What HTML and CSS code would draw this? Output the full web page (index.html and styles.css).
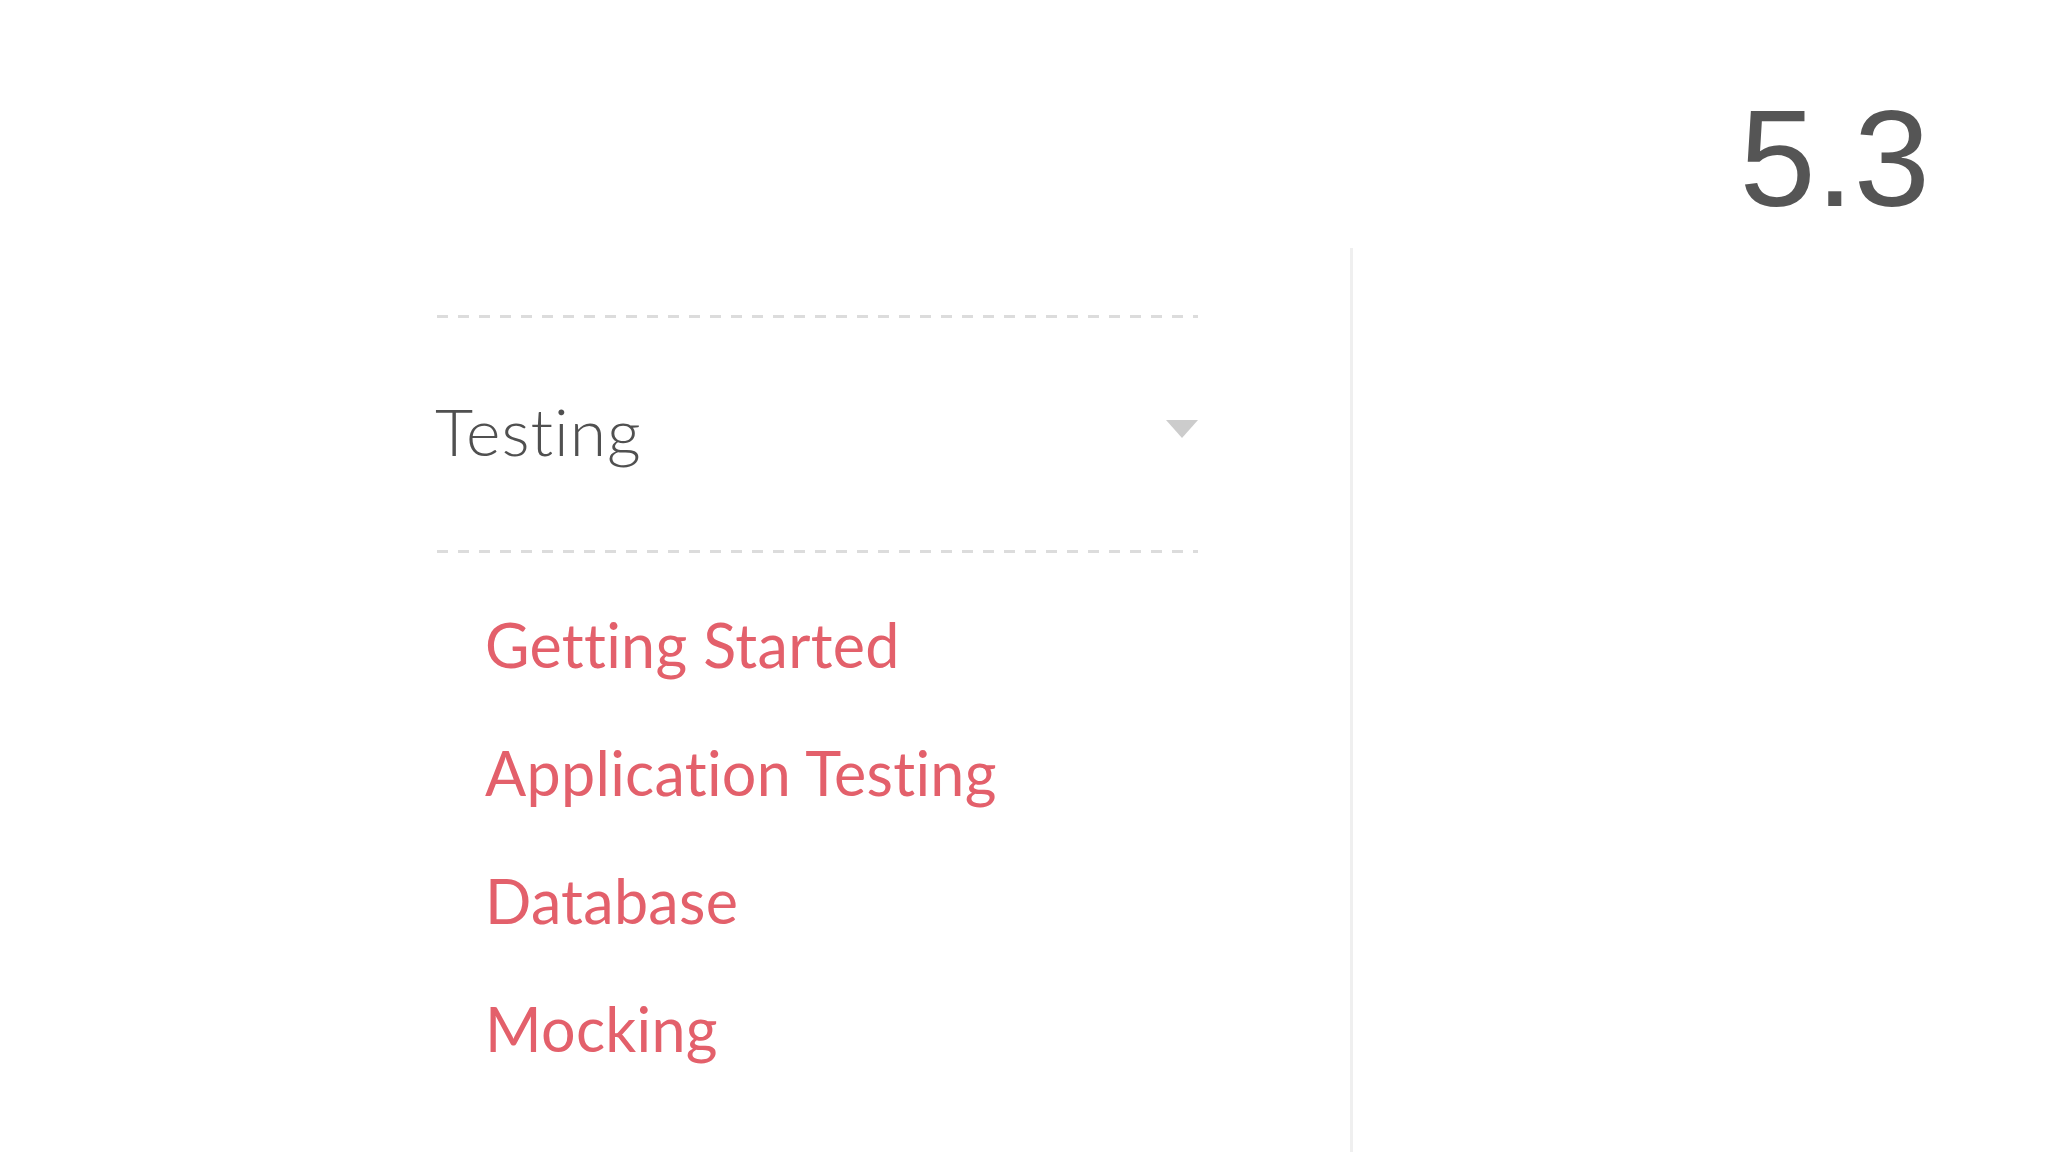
FILE: index.html
```html
<!DOCTYPE html>
<html lang="en">
<head>
<meta charset="utf-8">
<title>Testing - 5.3</title>
<link rel="stylesheet" href="styles.css">
</head>
<body>
<div class="page">
  <header class="topbar">
    <span class="version">5.3</span>
  </header>
  <div class="main">
    <nav class="sidebar">
      <div class="section">
        <div class="section-head">
          <span class="section-title">Testing</span>
          <span class="caret"></span>
        </div>
        <ul class="links">
          <li><a href="#">Getting Started</a></li>
          <li><a href="#">Application Testing</a></li>
          <li><a href="#">Database</a></li>
          <li><a href="#">Mocking</a></li>
        </ul>
      </div>
    </nav>
    <section class="content"></section>
  </div>
</div>
</body>
</html>
```

FILE: styles.css
```css
html, body {
  margin: 0;
  padding: 0;
  background: #ffffff;
}

.page {
  display: flex;
  flex-direction: column;
  height: 100vh;
  overflow: hidden;
}

.topbar {
  box-sizing: border-box;
  height: 248px;
  padding: 90px 118px 0 0;
  display: flex;
  justify-content: flex-end;
  align-items: flex-start;
}

.version {
  font-family: "Liberation Sans", Arial, sans-serif;
  font-size: 137px;
  line-height: 1;
  color: #555555;
}

.main {
  flex: 1;
  display: flex;
}

.sidebar {
  width: 763px;
  margin-left: 435px;
  padding-top: 67px;
}

.section {
  font-family: Lato, "Open Sans", sans-serif;
  font-variant-ligatures: none;
}

.section-head {
  display: flex;
  justify-content: space-between;
  align-items: flex-start;
  padding: 76px 0 83px 0;
  background-image: repeating-linear-gradient(to right, #dcdcdc 0 11px, transparent 11px 21px),
                    repeating-linear-gradient(to right, #dcdcdc 0 11px, transparent 11px 21px);
  background-size: 100% 3px, 100% 3px;
  background-position: 2px 0, 2px 100%;
  background-repeat: no-repeat;
}

.section-title {
  font-size: 66px;
  font-weight: 300;
  letter-spacing: 1px;
  line-height: 1.2;
  color: #505050;
}

.caret {
  width: 0;
  height: 0;
  margin-top: 29px;
  border-left: 16px solid transparent;
  border-right: 16px solid transparent;
  border-top: 18px solid #cccccc;
}

.links {
  list-style: none;
  margin: 28px 0 0 0;
  padding: 0 0 0 50px;
}

.links li {
  font-size: 61px;
  line-height: 128px;
  letter-spacing: 0.3px;
}

.links a {
  color: #e3606b;
  text-decoration: none;
}

.content {
  margin-left: 152px;
  flex: 1;
  border-left: 3px solid #efefef;
}
```
